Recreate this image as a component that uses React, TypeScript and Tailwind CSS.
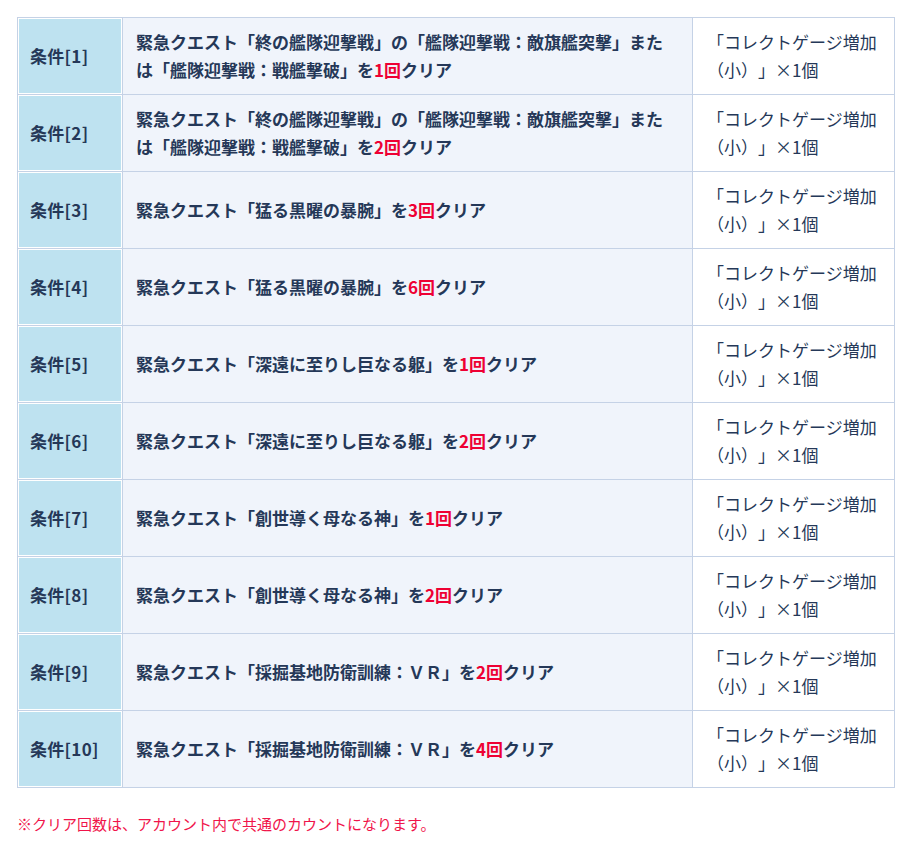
const rows: { label: string; quest: string; count: string }[] = [
  { label: "条件[1]", quest: "緊急クエスト「終の艦隊迎撃戦」の「艦隊迎撃戦：敵旗艦突撃」または「艦隊迎撃戦：戦艦撃破」を", count: "1回" },
  { label: "条件[2]", quest: "緊急クエスト「終の艦隊迎撃戦」の「艦隊迎撃戦：敵旗艦突撃」または「艦隊迎撃戦：戦艦撃破」を", count: "2回" },
  { label: "条件[3]", quest: "緊急クエスト「猛る黒曜の暴腕」を", count: "3回" },
  { label: "条件[4]", quest: "緊急クエスト「猛る黒曜の暴腕」を", count: "6回" },
  { label: "条件[5]", quest: "緊急クエスト「深遠に至りし巨なる躯」を", count: "1回" },
  { label: "条件[6]", quest: "緊急クエスト「深遠に至りし巨なる躯」を", count: "2回" },
  { label: "条件[7]", quest: "緊急クエスト「創世導く母なる神」を", count: "1回" },
  { label: "条件[8]", quest: "緊急クエスト「創世導く母なる神」を", count: "2回" },
  { label: "条件[9]", quest: "緊急クエスト「採掘基地防衛訓練：ＶＲ」を", count: "2回" },
  { label: "条件[10]", quest: "緊急クエスト「採掘基地防衛訓練：ＶＲ」を", count: "4回" },
];

export default function App() {
  return (
    <div
      className="w-[910px] h-[842px] bg-white pt-[17px] pl-[17px] text-[#253858] [text-spacing-trim:space-all]"
      style={{ fontFamily: '"Noto Sans CJK JP", "Noto Sans", sans-serif' }}
    >
      <table className="table-fixed w-[877px] border-collapse text-[17px] leading-[28px]">
        <colgroup>
          <col className="w-[105px]" />
          <col className="w-[570px]" />
          <col className="w-[202px]" />
        </colgroup>
        <tbody>
          {rows.map((r) => (
            <tr key={r.label} className="h-[77px]">
              <th className="border border-[#c5d2e6] bg-[#bee2f0] shadow-[inset_0_0_0_1px_#fff] px-[12px] text-left font-bold align-middle whitespace-nowrap tracking-[0.3px]">
                {r.label}
              </th>
              <td className="border border-[#c5d2e6] bg-[#f0f4fb] px-[13px] py-[10px] font-bold align-middle">
                {r.quest}
                <span className="text-[#ee0033]">{r.count}</span>
                クリア
              </td>
              <td className="border border-[#c5d2e6] bg-white px-[14px] py-[10px] align-middle">
                「コレクトゲージ増加（小）」×1個
              </td>
            </tr>
          ))}
        </tbody>
      </table>
      <p className="mt-[25px] text-[15px] text-[#f0144a]">
        ※クリア回数は、アカウント内で共通のカウントになります。
      </p>
    </div>
  );
}
